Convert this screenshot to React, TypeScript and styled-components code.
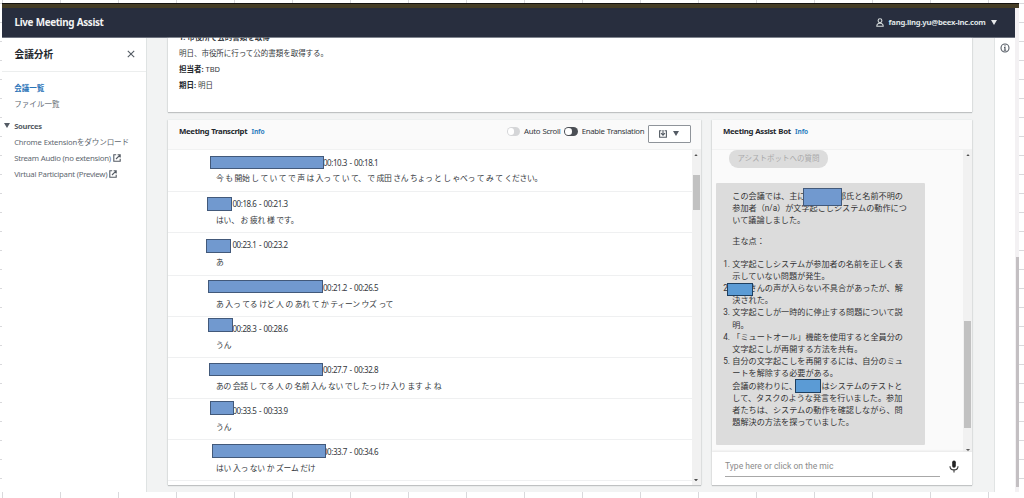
import React from "react";
import styled, { createGlobalStyle } from "styled-components";

const sans = `"Noto Sans", "Noto Sans CJK JP", sans-serif`;
const roboto = `Roboto, "Noto Sans CJK JP", sans-serif`;

const GlobalStyle = createGlobalStyle`
  * { box-sizing: border-box; }
  body { margin: 0; background: #fff; font-family: ${sans}; font-size: 7.4px; color: #33373c; text-spacing-trim: space-all; }
  p, h1, h2, ul, ol { margin: 0; padding: 0; }
`;

const Sheet = styled.div`
  width: 1024px;
  height: 498px;
  padding: 3px 5px 6px 2px;
  overflow: hidden;
  background:
    repeating-linear-gradient(to right, transparent 0 2px, #d9d9dc 2px 3px, transparent 3px 58px) 0 0 / 1024px 3px no-repeat,
    repeating-linear-gradient(to right, transparent 0 2px, #d9d9dc 2px 3px, transparent 3px 58px) 0 492px / 1024px 6px no-repeat,
    repeating-linear-gradient(to bottom, transparent 0 3px, #d9d9dc 3px 4px, transparent 4px 19px) 0 0 / 1024px 492px no-repeat,
    #fff;
`;
const Frame = styled.div`
  height: 489px;
  display: flex;
  flex-direction: column;
  background: #fff;
`;
const Strip = styled.div`
  height: 5px;
  flex: none;
  background: #453d26;
  border-top: 1px solid #15130f;
`;
const Viewport = styled.div`
  flex: 1;
  min-height: 0;
  display: flex;
`;
const Page = styled.div`
  flex: 1;
  display: flex;
  flex-direction: column;
`;
const PageScroll = styled.div`
  width: 4px;
  padding: 249px 0 5px 1px;
  background: #f3f1f3;
`;
const PageThumb = styled.div`
  height: 230px;
  background: #c3bfc2;
`;
const TopBar = styled.header`
  height: 29.5px;
  flex: none;
  padding: 0 18px 0 12.5px;
  display: flex;
  align-items: center;
  justify-content: space-between;
  background: #282e3e;
  border-bottom: 1px solid #6d727e;
  color: #f2f3f3;
`;
const Brand = styled.h1`
  font-size: 9.9px;
  font-weight: 700;
  letter-spacing: -0.36px;
  word-spacing: 0.4px;
`;
const Account = styled.div`
  display: flex;
  align-items: center;
  gap: 4.5px;
  font-weight: 700;
  font-size: 7.7px;
`;
const Email = styled.span`
  letter-spacing: -0.24px;
  margin-right: 1px;
  color: #dfe2e4;
`;
const Columns = styled.div`
  flex: 1;
  min-height: 0;
  display: flex;
`;
const Sidebar = styled.nav`
  width: 145px;
  border-right: 1px solid #dfe3e3;
  background: #fff;
`;
const SidebarHead = styled.div`
  height: 34px;
  padding: 0 11.5px 0 12.5px;
  display: flex;
  align-items: center;
  justify-content: space-between;
  border-bottom: 1px solid #eceeee;
`;
const SidebarTitle = styled.h2`
  font-size: 9.7px;
  line-height: 14px;
  font-weight: 700;
  padding-top: 1px;
  color: #23272c;
`;
const NavList = styled.div`
  padding: 7.5px 0 0 12.2px;
`;
const NavItem = styled.div<{ $active?: boolean; $size?: number; $ls?: number }>`
  height: 16px;
  display: flex;
  align-items: center;
  gap: 2px;
  white-space: nowrap;
  font-size: ${(p) => p.$size ?? 7.8}px;
  letter-spacing: ${(p) => p.$ls ?? -0.28}px;
  word-spacing: 0.2px;
  font-weight: ${(p) => (p.$active ? 700 : 400)};
  color: ${(p) => (p.$active ? "#2b74b8" : "#60676f")};
`;
const NavGroup = styled.div`
  height: 16px;
  margin: 6.5px 0 0 -10px;
  display: flex;
  align-items: center;
  gap: 4px;
  font-size: 7.6px;
  letter-spacing: -0.25px;
  font-weight: 700;
  color: #545b64;
`;
const Main = styled.main`
  flex: 1;
  padding: 0 21px 7px 21px;
  display: flex;
  flex-direction: column;
  gap: 8px;
  background: #f2f3f3;
`;
const Card = styled.section`
  background: #fff;
  box-shadow: 0 1px 1px #bfc1c2, 1px 0 1px #e2e4e4, -1px 0 1px #e2e4e4;
`;
const TaskCard = styled(Card)`
  height: 74.5px;
  flex: none;
  padding-left: 11px;
  margin-right: 0.5px;
  clip-path: inset(0 -4px -4px -4px);
`;
const TaskBody = styled.div`
  margin-top: -8.6px;
`;
const TaskLine = styled.p<{ $bold?: boolean; $ls?: number }>`
  height: 16px;
  line-height: 16px;
  font-size: 7.5px;
  font-weight: ${(p) => (p.$bold ? 700 : 400)};
  letter-spacing: ${(p) => p.$ls ?? 0}px;
  b { color: #23272c; }
`;
const Panels = styled.div`
  flex: 1;
  min-height: 0;
  display: grid;
  grid-template-columns: 532.5px 260px;
  gap: 11.5px;
`;
const Panel = styled(Card)`
  display: flex;
  flex-direction: column;
  min-height: 0;
`;
const PanelHead = styled.div`
  height: 29.5px;
  flex: none;
  padding: 0 10px 6px 11px;
  display: flex;
  align-items: center;
  background: #fafafa;
  border-bottom: 1px solid #f1f2f2;
`;
const PanelTitle = styled.h2`
  font-size: 7.8px;
  font-weight: 700;
  letter-spacing: -0.33px;
  word-spacing: 0.5px;
  color: #23272c;
`;
const InfoLink = styled.span`
  margin-left: 4.3px;
  font-size: 6.6px;
  font-weight: 700;
  letter-spacing: -0.15px;
  color: #2f7fc0;
`;
const Tools = styled.div`
  margin-left: auto;
  display: flex;
  align-items: center;
`;
const Switch = styled.span<{ $on?: boolean }>`
  width: 13.5px;
  height: 8.5px;
  padding: 1px;
  margin-right: 4px;
  border-radius: 5px;
  display: flex;
  background: ${(p) => (p.$on ? "#4b4f55" : "#d5d6d8")};
  &::after {
    content: "";
    width: 6.5px;
    height: 6.5px;
    border-radius: 50%;
    background: #fff;
  }
`;
const SwitchLabel = styled.span`
  font-size: 7.8px;
  letter-spacing: -0.29px;
  word-spacing: 0.4px;
  margin-right: 3.7px;
  white-space: nowrap;
`;
const ExportButton = styled.button`
  width: 42.5px;
  height: 18px;
  margin-top: 5px;
  padding: 0;
  display: flex;
  align-items: center;
  justify-content: center;
  gap: 6px;
  background: #fff;
  border: 1px solid #8f949a;
  border-radius: 1px;
`;
const TranscriptBody = styled.div`
  flex: 1;
  min-height: 0;
  display: flex;
`;
const Rows = styled.div`
  flex: 1;
  margin-top: 1.3px;
`;
const Row = styled.article<{ $h: number; $pad: number }>`
  position: relative;
  height: ${(p) => p.$h}px;
  padding: ${(p) => p.$pad}px 0 0 48px;
  border-bottom: 1px solid #eff0f1;
`;
const Stamp = styled.div<{ $indent: number }>`
  height: 16px;
  line-height: 16px;
  padding-left: ${(p) => p.$indent}px;
  font-size: 8px;
  letter-spacing: -0.46px;
  word-spacing: 0.9px;
  white-space: nowrap;
`;
const Speech = styled.p<{ $ls: number; $top: number }>`
  height: 16px;
  margin-top: ${(p) => p.$top}px;
  line-height: 16px;
  font-size: 7.8px;
  letter-spacing: ${(p) => p.$ls}px;
  white-space: nowrap;
`;
const Mask = styled.span<{ $x: number; $y: number; $w: number; $h: number; $vivid?: boolean }>`
  position: absolute;
  left: ${(p) => p.$x}px;
  top: ${(p) => p.$y}px;
  width: ${(p) => p.$w}px;
  height: ${(p) => p.$h}px;
  background: ${(p) => (p.$vivid ? "#5b9bd5" : "#7199cf")};
  border: 1px solid ${(p) => (p.$vivid ? "#1f3f5f" : "#42597a")};
`;
const ScrollBar = styled.div<{ $end?: number }>`
  width: 9px;
  flex: none;
  padding: 4px 1px ${(p) => p.$end ?? 4}px;
  display: flex;
  flex-direction: column;
  align-items: center;
  background: #f1f1f1;
`;
const Thumb = styled.div<{ $top: number; $h: number }>`
  width: 7px;
  height: ${(p) => p.$h}px;
  margin: ${(p) => p.$top}px 0 auto;
  background: #c1c1c1;
`;
const BotBody = styled.div`
  height: 302px;
  flex: none;
  display: flex;
  background: #fafafa;
`;
const Chat = styled.div`
  flex: 1;
  padding-left: 4px;
`;
const Prompt = styled.div`
  width: 99px;
  height: 18px;
  margin-left: 13px;
  line-height: 16px;
  text-align: center;
  border-radius: 8px 8px 9px 9px;
  background: #dcdcdc;
  color: #a9a9aa;
  font-size: 7.5px;
`;
const Bubble = styled.div`
  position: relative;
  width: 208.5px;
  height: 261.5px;
  margin-top: 15.5px;
  padding: 7px 0 0 16.3px;
  background: #dcdcdc;
  border-radius: 1px;
  font-family: ${roboto};
  font-size: 8.13px;
  line-height: 12.2px;
  color: #333334;
  white-space: nowrap;
`;
const Para = styled.p<{ $gap: number }>`
  margin-bottom: ${(p) => p.$gap}px;
`;
const Points = styled.ol`
  list-style: none;
`;
const Point = styled.li`
  display: flex;
  margin-left: -9px;
`;
const Num = styled.span`
  width: 9px;
  flex: none;
`;
const Composer = styled.div`
  flex: 1;
  padding: 0 13.5px 3px 13px;
  display: flex;
  align-items: center;
  justify-content: space-between;
  background: #fff;
  box-shadow: 0 -1px 2px #e6e6e6;
`;
const Field = styled.div`
  width: 215px;
  height: 15.5px;
  margin-top: 4px;
  border-bottom: 1px solid #a8a8a8;
  font-family: ${roboto};
  font-size: 8.55px;
  line-height: 10px;
  color: #8b8b8b;
`;
const HelpRail = styled.aside`
  width: 21.5px;
  border-left: 1px solid #e1e4e4;
  background: #fff;
  padding: 5.5px 0 0 5px;
`;

const Caret = ({ w = 6, h = 5, color = "#545b64", up = false }: { w?: number; h?: number; color?: string; up?: boolean }) => (
  <svg width={w} height={h} viewBox="0 0 6 5" preserveAspectRatio="none" style={{ flex: "none", display: "block" }}>
    <path d={up ? "M0 5h6L3 0z" : "M0 0h6L3 5z"} fill={color} />
  </svg>
);
const UserIcon = () => (
  <svg width="8" height="9" viewBox="0 0 8 9" fill="none" stroke="#d5dbdb" strokeWidth="1.1">
    <circle cx="4" cy="2.7" r="1.9" />
    <path d="M.8 8.2c0-2 1.2-3 3.2-3s3.2 1 3.2 3z" />
  </svg>
);
const CloseIcon = () => (
  <svg width="8" height="8" viewBox="0 0 8 8" stroke="#545b64" strokeWidth="1.1">
    <path d="M.8.8l6.4 6.4M7.2.8L.8 7.2" />
  </svg>
);
const ExternalIcon = () => (
  <svg width="8" height="8" viewBox="0 0 8 8" fill="none" stroke="#545b64" strokeWidth="1.1">
    <path d="M3.2.8H.8v6.4h6.4V4.8M4.6.8h2.6v2.6M7.2.8L3 5" />
  </svg>
);
const ExportIcon = () => (
  <svg width="8" height="8" viewBox="0 0 8 8" fill="none" stroke="#545b64" strokeWidth="1.1">
    <path d="M2.4.7H.6v6.6h6.8V.7H5.6M4 0v5M2 3.2l2 2 2-2" />
  </svg>
);
const InfoIcon = () => (
  <svg width="10" height="10" viewBox="0 0 10 10" fill="none" stroke="#545b64" strokeWidth="1.1">
    <circle cx="5" cy="5" r="4" />
    <path d="M5 2.3v1.1M4 4.6h1v2.6M3.8 7.2h2.4" />
  </svg>
);
const MicIcon = () => (
  <svg width="10" height="13" viewBox="0 0 10 13">
    <rect x="3.2" y=".4" width="3.6" height="7.4" rx="1.8" fill="#222" />
    <path d="M1 6.2c0 2.3 1.8 3.7 4 3.7s4-1.4 4-3.7M5 10v2.4" fill="none" stroke="#333" strokeWidth="1.1" />
  </svg>
);

type Line = { time: string; text: string; h: number; pad: number; top?: number; ls: number; long?: boolean; mask: [number, number, number, number] };
const lines: Line[] = [
  { time: "00:10.3 - 00:18.1", text: "今 も 開始 し て い て で 声 は 入っ て い て、 で 成田 さん ちょっ と し ゃべっ て み て ください。", h: 41, pad: 4, top: -0.6, ls: -0.3, long: true, mask: [41.7, 4.8, 114.3, 13] },
  { time: "00:18.6 - 00:21.3", text: "はい、 お 疲れ 様 です。", h: 41, pad: 4, top: -0.3, ls: -0.22, mask: [39.3, 5.5, 24.7, 14] },
  { time: "00:23.1 - 00:23.2", text: "あ", h: 43, pad: 4, top: 1.5, ls: 0, mask: [38, 5.8, 25, 14] },
  { time: "00:21.2 - 00:26.5", text: "あ 入っ てる けど 人 の あれ て か ティーン ウズ って", h: 41, pad: 4, top: -0.3, ls: -0.24, long: true, mask: [40, 3.8, 115, 13] },
  { time: "00:28.3 - 00:28.6", text: "うん", h: 41, pad: 4, top: -0.3, ls: 0, mask: [40, 1.7, 25, 14] },
  { time: "00:27.7 - 00:32.8", text: "あの 会話 し てる 人 の 名前 入ん ない でし たっ け? 入り ます よ ね", h: 41.5, pad: 4, ls: -0.27, long: true, mask: [41, 4.8, 114, 13.5] },
  { time: "00:33.5 - 00:33.9", text: "うん", h: 41, pad: 3.7, ls: 0, mask: [41.7, 2, 24.7, 13.5] },
  { time: "00:33.7 - 00:34.6", text: "はい 入っ ない か ズーム だけ", h: 41, pad: 3.7, ls: -0.24, long: true, mask: [44, 4, 114, 13.5] },
];
const points = [
  ["1.", "文字起こしシステムが参加者の名前を正しく表", "示していない問題が発生。"],
  ["2.", "　　さんの声が入らない不具合があったが、解", "決された。"],
  ["3.", "文字起こしが一時的に停止する問題について説", "明。"],
  ["4.", "「ミュートオール」機能を使用すると全員分の", "文字起こしが再開する方法を共有。"],
  ["5.", "自分の文字起こしを再開するには、自分のミュ", "ートを解除する必要がある。", "会議の終わりに、　　　はシステムのテストと", "して、タスクのような発言を行いました。参加", "者たちは、システムの動作を確認しながら、問", "題解決の方法を探っていました。"],
];

export default function App() {
  return (
    <Sheet>
      <GlobalStyle />
      <Frame>
        <Strip />
        <Viewport>
          <Page>
            <TopBar>
              <Brand>Live Meeting Assist</Brand>
              <Account>
                <UserIcon />
                <Email>fang.ling.yu@beex-inc.com</Email>
                <Caret color="#e6e8ea" />
              </Account>
            </TopBar>
            <Columns>
              <Sidebar>
                <SidebarHead>
                  <SidebarTitle>会議分析</SidebarTitle>
                  <CloseIcon />
                </SidebarHead>
                <NavList>
                  <NavItem $active $size={7.5} $ls={0}>会議一覧</NavItem>
                  <NavItem $size={7.5} $ls={0.08}>ファイル一覧</NavItem>
                  <NavGroup><Caret />Sources</NavGroup>
                  <NavItem $size={7.6} $ls={-0.17}>Chrome Extensionをダウンロード</NavItem>
                  <NavItem>Stream Audio (no extension)<ExternalIcon /></NavItem>
                  <NavItem>Virtual Participant (Preview)<ExternalIcon /></NavItem>
                </NavList>
              </Sidebar>
              <Main>
                <TaskCard>
                  <TaskBody>
                    <TaskLine $bold>1. 市役所で公的書類を取得</TaskLine>
                    <TaskLine $ls={-0.03}>明日、市役所に行って公的書類を取得する。</TaskLine>
                    <TaskLine><b>担当者:</b> TBD</TaskLine>
                    <TaskLine><b>期日:</b> 明日</TaskLine>
                  </TaskBody>
                </TaskCard>
                <Panels>
                  <Panel>
                    <PanelHead>
                      <PanelTitle>Meeting Transcript</PanelTitle>
                      <InfoLink>Info</InfoLink>
                      <Tools>
                        <Switch />
                        <SwitchLabel>Auto Scroll</SwitchLabel>
                        <Switch $on />
                        <SwitchLabel>Enable Translation</SwitchLabel>
                        <ExportButton><ExportIcon /><Caret /></ExportButton>
                      </Tools>
                    </PanelHead>
                    <TranscriptBody>
                      <Rows>
                        {lines.map((l) => (
                          <Row key={l.time} $h={l.h} $pad={l.pad}>
                            <Stamp $indent={l.long ? 107 : 16.5}>{l.time}</Stamp>
                            <Speech $ls={l.ls} $top={l.top ?? 0}>{l.text}</Speech>
                            <Mask $x={l.mask[0]} $y={l.mask[1]} $w={l.mask[2]} $h={l.mask[3]} />
                          </Row>
                        ))}
                      </Rows>
                      <ScrollBar>
                        <Caret up w={4} h={2.5} color="#505050" />
                        <Thumb $top={19} $h={35} />
                        <Caret w={4} h={2.5} color="#505050" />
                      </ScrollBar>
                    </TranscriptBody>
                  </Panel>
                  <Panel>
                    <PanelHead>
                      <PanelTitle>Meeting Assist Bot</PanelTitle>
                      <InfoLink>Info</InfoLink>
                    </PanelHead>
                    <BotBody>
                      <Chat>
                        <Prompt>アシストボットへの質問</Prompt>
                        <Bubble>
                          <Para $gap={8.3}>この会議では、主に　　　　郎氏と名前不明の<br />参加者（n/a）が文字起こしシステムの動作につ<br />いて議論しました。</Para>
                          <Para $gap={10.5}>主な点：</Para>
                          <Points>
                            {points.map(([n, ...rest]) => (
                              <Point key={n}>
                                <Num>{n}</Num>
                                <div>{rest.map((r) => <div key={r}>{r}</div>)}</div>
                              </Point>
                            ))}
                          </Points>
                          <Mask $x={87} $y={5} $w={39} $h={17.5} />
                          <Mask $vivid $x={11} $y={100} $w={26} $h={13} />
                          <Mask $vivid $x={79} $y={196} $w={26} $h={14} />
                        </Bubble>
                      </Chat>
                      <ScrollBar $end={0}>
                        <Caret up w={4} h={2.5} color="#505050" />
                        <Thumb $top={165} $h={107} />
                        <Caret w={4} h={2.5} color="#505050" />
                      </ScrollBar>
                    </BotBody>
                    <Composer>
                      <Field>Type here or click on the mic</Field>
                      <MicIcon />
                    </Composer>
                  </Panel>
                </Panels>
              </Main>
              <HelpRail><InfoIcon /></HelpRail>
            </Columns>
          </Page>
          <PageScroll><PageThumb /></PageScroll>
        </Viewport>
      </Frame>
    </Sheet>
  );
}
